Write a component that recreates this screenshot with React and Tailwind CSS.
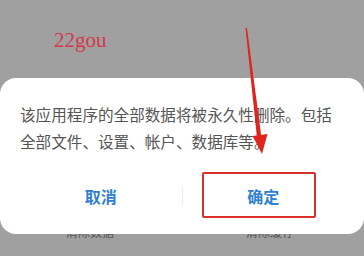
export default function App() {
  return (
    <div
      className="relative w-[364px] h-[256px] overflow-hidden bg-[#a0a0a0]"
      style={{ fontFamily: '"Noto Sans CJK SC", "Noto Sans", sans-serif' }}
    >
      <div className="h-[78px] pl-[54px] pt-[28px]">
        <span
          className="text-[21px] leading-none text-[#d4394b]"
          style={{ fontFamily: '"Liberation Serif", serif' }}
        >
          22gou
        </span>
      </div>

      <div className="relative z-10 h-[156px] rounded-[16px] bg-white">
        <p className="px-[20px] pt-[23px] text-[15.6px] leading-[27px] text-[#555555]">
          该应用程序的全部数据将被永久性删除。包括全部文件、设置、帐户、数据库等。
        </p>
        <div className="mt-[21px] flex px-[20px]">
          <button className="flex-1 h-[40px] text-[16px] font-bold text-[#2f80d1]">取消</button>
          <div className="my-[11px] w-px bg-[#ececec]" />
          <button className="flex-1 h-[40px] text-[16px] font-bold text-[#2f80d1]">确定</button>
        </div>
      </div>

      <div className="-mt-[9px] flex text-[12px] leading-[14px] text-[#555]">
        <span className="ml-[66px]">清除数据</span>
        <span className="ml-[132px]">清除缓存</span>
      </div>

      <div className="absolute left-[202px] top-[172px] z-20 h-[46px] w-[114px] rounded-[2px] border-2 border-[#d8302c]" />

      <svg className="absolute left-0 top-0 z-20" width="364" height="256" viewBox="0 0 364 256">
        <polygon points="245.5,28 247,28 261.5,138 257,138" fill="#e0251f" />
        <polygon points="252.5,136 267.5,134 262,154" fill="#e0251f" />
      </svg>
    </div>
  );
}
